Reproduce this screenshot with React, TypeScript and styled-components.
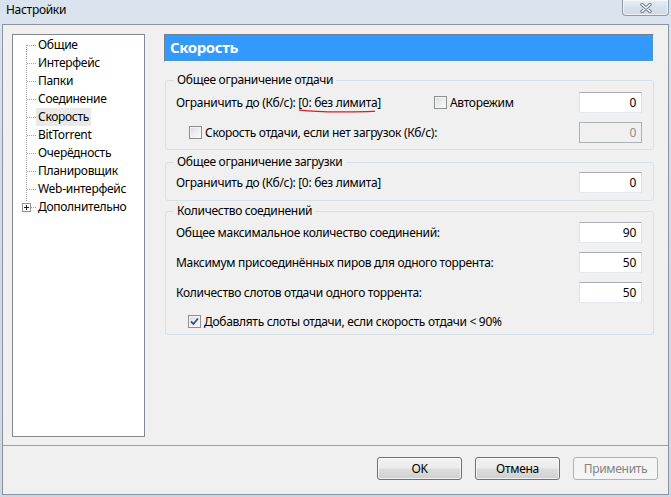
import React from "react";
import styled, { createGlobalStyle } from "styled-components";

const Global = createGlobalStyle`
  html, body { margin: 0; padding: 0; }
  body {
    font-family: "Noto Sans", "Open Sans", sans-serif;
    font-size: 12px;
    letter-spacing: -0.3px;
    color: #000;
    background: #d3dde9;
  }
  * { box-sizing: border-box; }
`;

const Window = styled.div`
  width: 671px;
  height: 497px;
  padding: 0 2px 2px 2px;
  display: flex;
  flex-direction: column;
  background: linear-gradient(180deg, #dae4ef 0%, #d2dde9 40%, #cdd8e5 100%);
  overflow: hidden;
`;

const TitleBar = styled.div`
  height: 24px;
  flex: none;
  display: flex;
  justify-content: space-between;
  align-items: flex-start;
`;

const TitleText = styled.div`
  padding-left: 4px;
  line-height: 20px;
  font-size: 12px;
  color: #000;
`;

const CloseButton = styled.div`
  width: 47px;
  height: 16px;
  border: 1px solid #8f9aa8;
  border-top: none;
  border-radius: 0 0 4px 4px;
  background: linear-gradient(180deg, #e6edf5 0%, #d9e2ec 50%, #cfd9e4 100%);
  box-shadow: inset 0 0 0 1px rgba(255, 255, 255, 0.6);
  display: flex;
  align-items: center;
  justify-content: center;
`;

const Client = styled.div`
  flex: 1;
  border: 1px solid #8c939d;
  background: #f0f0f0;
  display: flex;
  flex-direction: column;
`;

const Main = styled.div`
  height: 420px;
  flex: none;
  display: flex;
  gap: 19px;
  padding: 9px 14px 8px 9px;
`;

const Tree = styled.div`
  width: 133px;
  height: 403px;
  flex: none;
  background: #fff;
  border: 1px solid #828790;
  padding-top: 1px;
  display: flex;
  flex-direction: column;
`;

const TreeRow = styled.div`
  height: 18px;
  display: flex;
  align-items: center;
`;

const TreeLabel = styled.span<{ $selected?: boolean }>`
  padding: 0 2px;
  line-height: 18px;
  white-space: nowrap;
  background: ${(p) => (p.$selected ? "#e9e9e9" : "transparent")};
`;

const Panel = styled.div`
  flex: 1;
  display: flex;
  flex-direction: column;
`;

const Header = styled.div`
  height: 28px;
  flex: none;
  background: #3399ff;
  border: 1px solid;
  border-color: #7f7f7f #ffffff #ffffff #7f7f7f;
  color: #fff;
  font-weight: 700;
  font-size: 15px;
  letter-spacing: -0.4px;
  line-height: 25px;
  padding-left: 5px;
`;

const Group = styled.fieldset<{ $mt: number; $pt: number; $pb: number }>`
  margin: ${(p) => p.$mt}px 0 0 1px;
  padding: ${(p) => p.$pt}px 11px ${(p) => p.$pb}px 10px;
  border: 1px solid #d5dfe5;
  border-radius: 3px;
  min-width: 0;
  display: flex;
  flex-direction: column;
  gap: 9px;
`;

const Legend = styled.legend`
  padding: 0 3px;
  margin-left: -2px;
  line-height: 16px;
  font-size: 12px;
`;

const Row = styled.div<{ $cols?: string }>`
  height: 21px;
  display: grid;
  grid-template-columns: ${(p) => p.$cols || "1fr 63px"};
  align-items: center;
`;

const CheckRow = styled.div<{ $indent: number; $h?: number }>`
  height: ${(p) => p.$h || 21}px;
  display: flex;
  align-items: center;
  gap: 3px;
  padding-left: ${(p) => p.$indent}px;
`;

const CheckInline = styled.div`
  display: flex;
  align-items: center;
  gap: 3px;
`;

const Label = styled.span`
  white-space: nowrap;
`;

const Annotated = styled.span`
  position: relative;
  white-space: nowrap;
`;

const Scribble = styled.svg`
  position: absolute;
  left: 1px;
  top: 15px;
  overflow: visible;
`;

const Box = styled.span`
  width: 13px;
  height: 13px;
  flex: none;
  border: 1px solid #8e8f8f;
  background: linear-gradient(135deg, #d9dbde 0%, #eef0f2 60%, #fafafa 100%);
  box-shadow: inset 0 0 0 1px #f4f4f4;
  display: flex;
  align-items: center;
  justify-content: center;
`;

const Input = styled.div<{ $disabled?: boolean }>`
  width: 63px;
  height: 21px;
  border: 1px solid;
  border-color: ${(p) =>
    p.$disabled ? "#adb2b5" : "#abadb3 #dbdfe6 #e3e9ef #e2e3ea"};
  background: ${(p) => (p.$disabled ? "#f0f0f0" : "#fff")};
  color: ${(p) => (p.$disabled ? "#8d8d8d" : "#000")};
  text-align: right;
  padding-right: 5px;
  line-height: 19px;
  font-size: 12px;
`;

const Separator = styled.div`
  height: 1px;
  flex: none;
  background: #a0a0a0;
`;

const Footer = styled.div`
  flex: 1;
  display: flex;
  justify-content: flex-end;
  align-items: flex-start;
  gap: 13px;
  padding: 11px 10px 0 0;
`;

const Button = styled.div<{ $disabled?: boolean }>`
  width: 85px;
  height: 23px;
  border: 1px solid ${(p) => (p.$disabled ? "#adb2b5" : "#707070")};
  border-radius: 3px;
  background: ${(p) =>
    p.$disabled
      ? "#f4f4f4"
      : "linear-gradient(180deg, #f2f2f2 0%, #ebebeb 48%, #dddddd 52%, #cfcfcf 100%)"};
  box-shadow: ${(p) => (p.$disabled ? "none" : "inset 0 0 0 1px rgba(255,255,255,0.7)")};
  color: ${(p) => (p.$disabled ? "#838383" : "#000")};
  display: flex;
  align-items: center;
  justify-content: center;
  font-size: 12px;
`;

type Conn = "first" | "mid" | "plus";

const Connector = ({ kind }: { kind: Conn }) => (
  <svg width="23" height="18" viewBox="0 0 23 18" shapeRendering="crispEdges" style={{ flex: "none" }}>
    {kind === "first" && (
      <line x1="13.5" y1="9" x2="13.5" y2="18" stroke="#a0a0a0" strokeDasharray="1 1" />
    )}
    {kind === "mid" && (
      <line x1="13.5" y1="0" x2="13.5" y2="18" stroke="#a0a0a0" strokeDasharray="1 1" />
    )}
    {kind === "plus" ? (
      <>
        <line x1="13.5" y1="0" x2="13.5" y2="4" stroke="#a0a0a0" strokeDasharray="1 1" />
        <line x1="18" y1="9.5" x2="23" y2="9.5" stroke="#a0a0a0" strokeDasharray="1 1" />
        <rect x="9.5" y="5.5" width="8" height="8" fill="#fff" stroke="#919191" />
        <line x1="11" y1="9.5" x2="16" y2="9.5" stroke="#1e1e1e" />
        <line x1="13.5" y1="7" x2="13.5" y2="12" stroke="#1e1e1e" />
      </>
    ) : (
      <line x1="14" y1="9.5" x2="23" y2="9.5" stroke="#a0a0a0" strokeDasharray="1 1" />
    )}
  </svg>
);

const Check = ({ checked }: { checked?: boolean }) => (
  <Box>
    {checked && (
      <svg width="9" height="9" viewBox="0 0 9 9">
        <path d="M1 4.5 L3.5 7 L8 1.5" fill="none" stroke="#3b4f8a" strokeWidth="1.8" />
      </svg>
    )}
  </Box>
);

const treeItems = [
  "Общие",
  "Интерфейс",
  "Папки",
  "Соединение",
  "Скорость",
  "BitTorrent",
  "Очерёдность",
  "Планировщик",
  "Web-интерфейс",
  "Дополнительно",
];

export default function App() {
  return (
    <>
      <Global />
      <Window>
        <TitleBar>
          <TitleText>Настройки</TitleText>
          <CloseButton>
            <svg width="12" height="10" viewBox="0 0 12 10">
              <path d="M2 1.5 L10 8.5 M10 1.5 L2 8.5" stroke="#6f7c8a" strokeWidth="3.4" strokeLinecap="round" />
              <path d="M2 1.5 L10 8.5 M10 1.5 L2 8.5" stroke="#f7f9fb" strokeWidth="1.6" strokeLinecap="round" />
            </svg>
          </CloseButton>
        </TitleBar>
        <Client>
          <Main>
            <Tree>
              {treeItems.map((t, i) => (
                <TreeRow key={t}>
                  <Connector kind={i === 0 ? "first" : i === treeItems.length - 1 ? "plus" : "mid"} />
                  <TreeLabel $selected={t === "Скорость"}>{t}</TreeLabel>
                </TreeRow>
              ))}
            </Tree>
            <Panel>
              <Header>Скорость</Header>
              <Group $mt={10} $pt={4} $pb={6}>
                <Legend>Общее ограничение отдачи</Legend>
                <Row $cols="258px 1fr 63px">
                  <Label>
                    Ограничить до (Кб/с):{" "}
                    <Annotated>
                      [0: без лимита]
                      <Scribble width="76" height="4" viewBox="0 0 76 4">
                        <path d="M0.5 1.2 C 15 2.8, 35 3.2, 55 2.8 S 72 2.4, 75.5 2.2" fill="none" stroke="#e8141c" strokeWidth="1.3" strokeLinecap="round" />
                      </Scribble>
                    </Annotated>
                  </Label>
                  <CheckInline>
                    <Check />
                    <Label>Авторежим</Label>
                  </CheckInline>
                  <Input>0</Input>
                </Row>
                <Row $cols="1fr 63px">
                  <CheckRow $indent={13}>
                    <Check />
                    <Label>Скорость отдачи, если нет загрузок (Кб/с):</Label>
                  </CheckRow>
                  <Input $disabled>0</Input>
                </Row>
              </Group>
              <Group $mt={4} $pt={2} $pb={7}>
                <Legend>Общее ограничение загрузки</Legend>
                <Row>
                  <Label>Ограничить до (Кб/с): [0: без лимита]</Label>
                  <Input>0</Input>
                </Row>
              </Group>
              <Group $mt={2} $pt={3} $pb={4}>
                <Legend>Количество соединений</Legend>
                <Row>
                  <Label>Общее максимальное количество соединений:</Label>
                  <Input>90</Input>
                </Row>
                <Row>
                  <Label>Максимум присоединённых пиров для одного торрента:</Label>
                  <Input>50</Input>
                </Row>
                <Row>
                  <Label>Количество слотов отдачи одного торрента:</Label>
                  <Input>50</Input>
                </Row>
                <CheckRow $indent={12} $h={18}>
                  <Check checked />
                  <Label>Добавлять слоты отдачи, если скорость отдачи &lt; 90%</Label>
                </CheckRow>
              </Group>
            </Panel>
          </Main>
          <Separator />
          <Footer>
            <Button>OK</Button>
            <Button>Отмена</Button>
            <Button $disabled>Применить</Button>
          </Footer>
        </Client>
      </Window>
    </>
  );
}
